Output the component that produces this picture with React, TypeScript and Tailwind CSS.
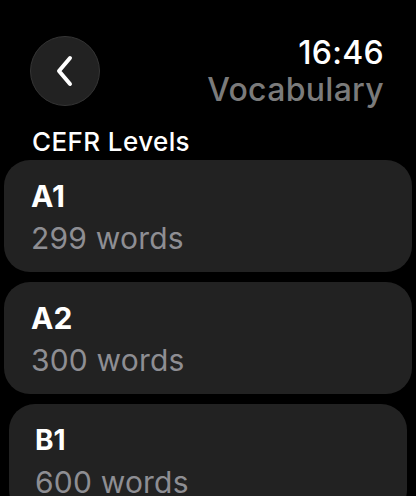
const levels = [
  { code: "A1", words: 299 },
  { code: "A2", words: 300 },
  { code: "B1", words: 600 },
];

function BackButton() {
  return (
    <button className="flex h-[70px] w-[70px] items-center justify-center rounded-full border border-[#353535] bg-[#222222]">
      <svg width="22" height="32" viewBox="0 0 22 32" fill="none">
        <path d="M16 3 L5 16 L16 29" stroke="white" strokeWidth="4" strokeLinecap="round" strokeLinejoin="round" />
      </svg>
    </button>
  );
}

export default function App() {
  return (
    <div className="h-[496px] w-[416px] overflow-hidden bg-black font-['Inter',sans-serif] text-white">
      <div className="flex items-start justify-between pl-[30px] pr-[32px] pt-[36px]">
        <BackButton />
        <div className="flex flex-col items-end">
          <span className="text-[32px] font-medium leading-[34px] tracking-[0.3px]">16:46</span>
          <span className="text-[32px] font-medium leading-[40px] tracking-[0.3px] text-[#7b7b7b]">Vocabulary</span>
        </div>
      </div>
      <div className="pl-8 pt-[17px] text-[26px] font-medium leading-[30px] tracking-[0.4px]">CEFR Levels</div>
      <div className="mt-[3px] flex flex-col gap-[10px] px-1">
        {levels.map((l, i) => (
          <div
            key={l.code}
            className={
              i === 2
                ? "mx-[5px] h-[112px] shrink-0 rounded-[26px] bg-[#222222] pl-[26px] pt-[18px]"
                : "h-[112px] shrink-0 rounded-[26px] bg-[#222222] pl-[27px] pt-[18px]"
            }
          >
            <div className={i === 2 ? "text-[28px] font-bold leading-[36px]" : "text-[30px] font-bold leading-[36px]"}>{l.code}</div>
            <div className="mt-[4px] text-[30px] leading-[40px] tracking-[0.2px] text-[#8e8e93]">{l.words} words</div>
          </div>
        ))}
      </div>
    </div>
  );
}
